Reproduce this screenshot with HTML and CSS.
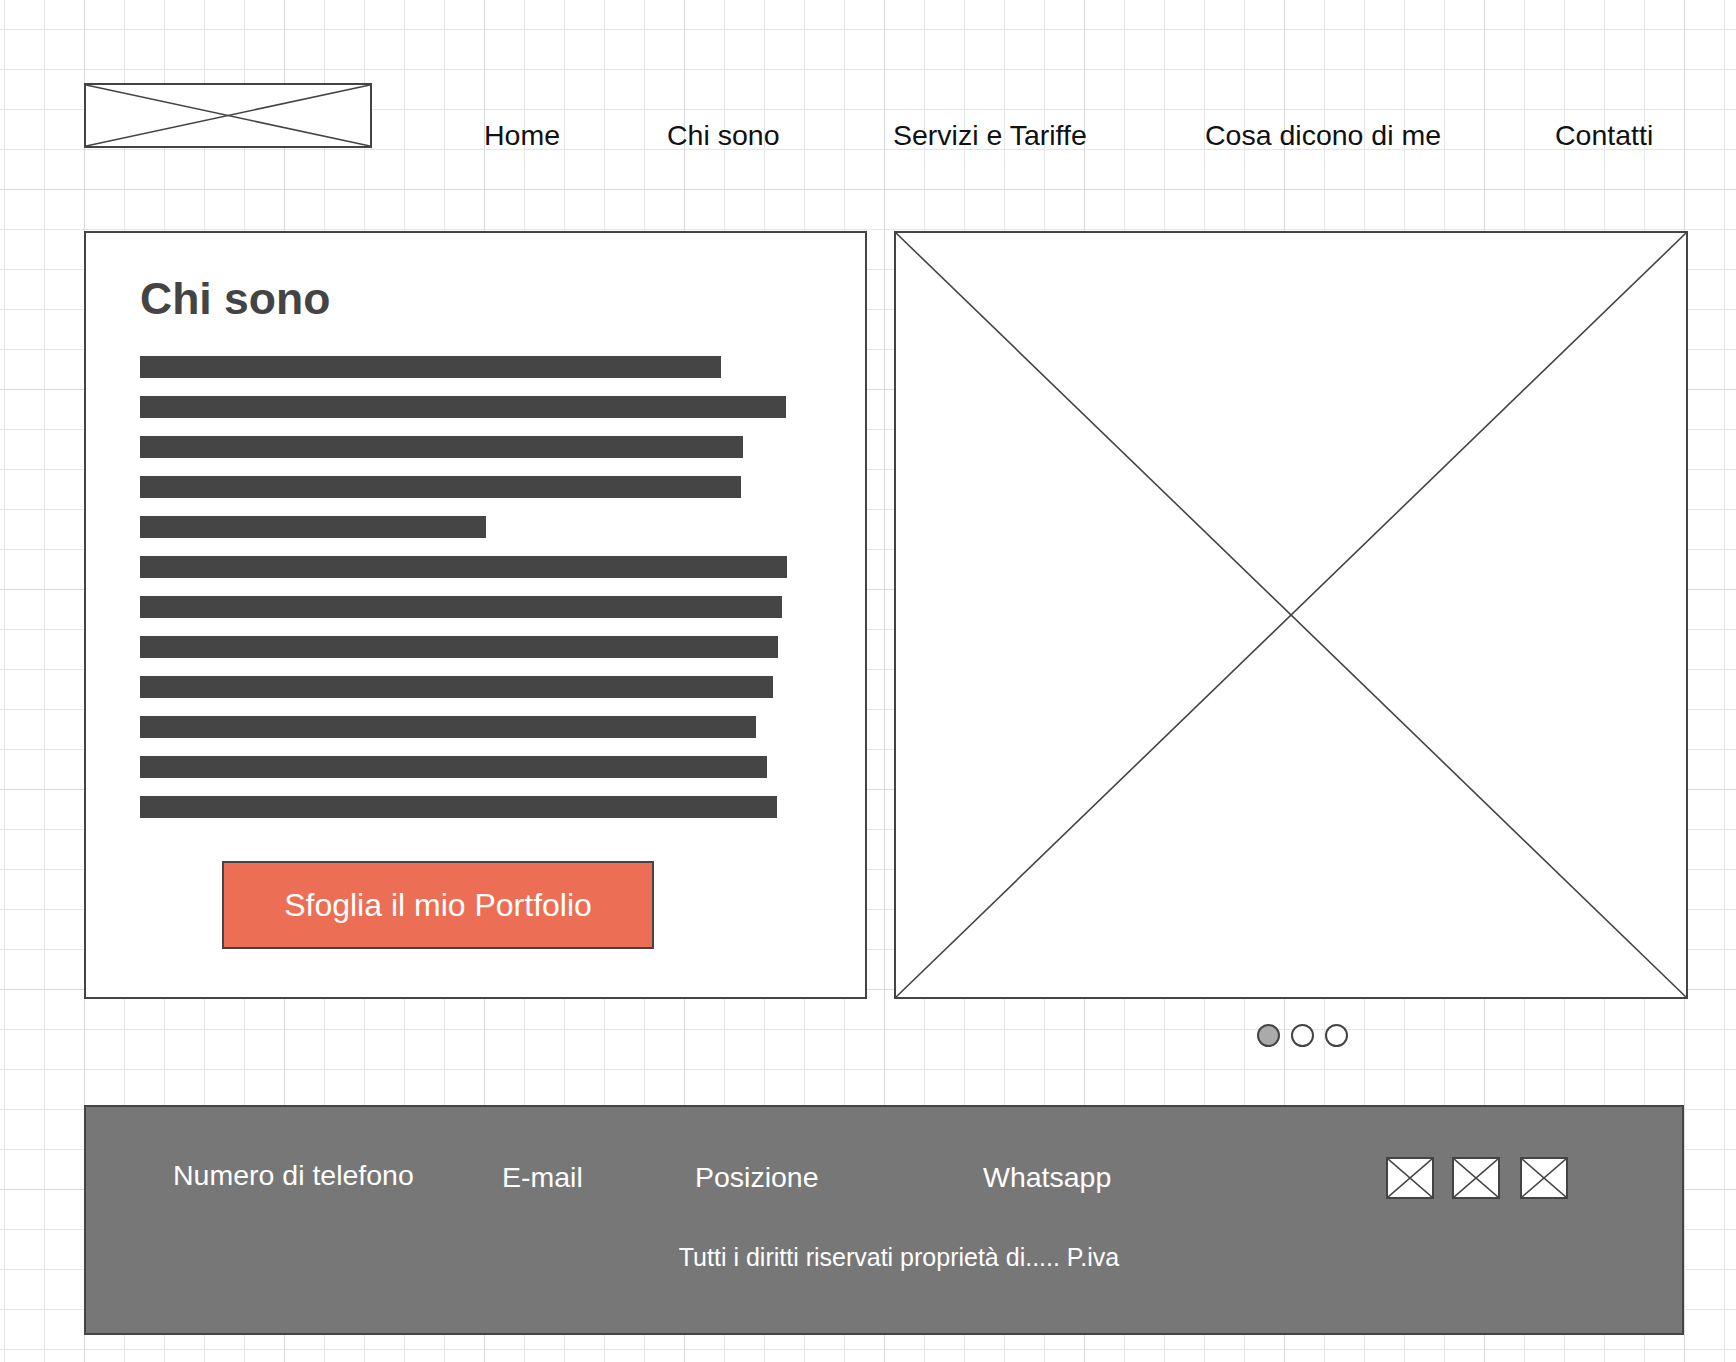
FILE: index.html
```html
<!DOCTYPE html>
<html lang="it">
<head>
    <meta charset="UTF-8">
    <meta name="viewport" content="width=device-width, initial-scale=1.0">
    <title>Chi sono</title>
    <link rel="stylesheet" href="styles.css">
</head>
<body>
    <div class="page">
        <header class="site-header">
            <a href="#" class="logo">
                <svg viewBox="0 0 284 61" preserveAspectRatio="none">
                    <line x1="0" y1="0" x2="284" y2="61"/>
                    <line x1="0" y1="61" x2="284" y2="0"/>
                </svg>
            </a>
            <nav class="navbar">
                <a href="#">Home</a>
                <a href="#">Chi sono</a>
                <a href="#">Servizi e Tariffe</a>
                <a href="#">Cosa dicono di me</a>
                <a href="#">Contatti</a>
            </nav>
        </header>

        <main class="hero">
            <section class="about-card">
                <h1>Chi sono</h1>
                <div class="text-lines">
                    <span class="line" style="width: 581px"></span>
                    <span class="line" style="width: 646px"></span>
                    <span class="line" style="width: 603px"></span>
                    <span class="line" style="width: 601px"></span>
                    <span class="line" style="width: 346px"></span>
                    <span class="line" style="width: 647px"></span>
                    <span class="line" style="width: 642px"></span>
                    <span class="line" style="width: 638px"></span>
                    <span class="line" style="width: 633px"></span>
                    <span class="line" style="width: 616px"></span>
                    <span class="line" style="width: 627px"></span>
                    <span class="line" style="width: 637px"></span>
                </div>
                <a href="#" class="portfolio-btn">Sfoglia il mio Portfolio</a>
            </section>

            <section class="slider">
                <div class="slide">
                    <svg viewBox="0 0 790 764" preserveAspectRatio="none">
                        <line x1="0" y1="0" x2="790" y2="764"/>
                        <line x1="0" y1="764" x2="790" y2="0"/>
                    </svg>
                </div>
                <div class="dots">
                    <span class="dot active"></span>
                    <span class="dot"></span>
                    <span class="dot"></span>
                </div>
            </section>
        </main>

        <footer class="site-footer">
            <div class="footer-links">
                <span class="phone">Numero di telefono</span>
                <span>E-mail</span>
                <span>Posizione</span>
                <span>Whatsapp</span>
                <div class="socials">
                    <a href="#" class="social"><svg viewBox="0 0 44 38" preserveAspectRatio="none"><line x1="0" y1="0" x2="44" y2="38"/><line x1="0" y1="38" x2="44" y2="0"/></svg></a>
                    <a href="#" class="social"><svg viewBox="0 0 44 38" preserveAspectRatio="none"><line x1="0" y1="0" x2="44" y2="38"/><line x1="0" y1="38" x2="44" y2="0"/></svg></a>
                    <a href="#" class="social"><svg viewBox="0 0 44 38" preserveAspectRatio="none"><line x1="0" y1="0" x2="44" y2="38"/><line x1="0" y1="38" x2="44" y2="0"/></svg></a>
                </div>
            </div>
            <p class="copyright">Tutti i diritti riservati proprietà di..... P.iva</p>
        </footer>
    </div>
</body>
</html>
```

FILE: styles.css
```css
* {
    box-sizing: border-box;
}

body {
    margin: 0;
    min-height: 100vh;
    font-family: "Liberation Sans", Arial, sans-serif;
    background-color: #ffffff;
    background-image:
        linear-gradient(#dadada 1px, transparent 1px),
        linear-gradient(90deg, #dadada 1px, transparent 1px),
        linear-gradient(#e6e6e6 1px, transparent 1px),
        linear-gradient(90deg, #e6e6e6 1px, transparent 1px);
    background-size: 200px 200px, 200px 200px, 40px 40px, 40px 40px;
    background-position: 0 189px, 84px 0, 0 29px, 4px 0;
}

.page {
    padding: 83px 0 28px 84px;
}

/* header */

.site-header {
    display: flex;
    align-items: flex-start;
    height: 65px;
}

.logo {
    display: block;
    width: 288px;
    height: 65px;
    border: 2px solid #444;
    background: #fff;
}

.logo svg,
.slide svg,
.social svg {
    display: block;
    width: 100%;
    height: 100%;
}

.logo line,
.slide line,
.social line {
    stroke: #444;
    stroke-width: 1.6;
    vector-effect: non-scaling-stroke;
}

.navbar {
    display: grid;
    grid-template-columns: 183px 226px 312px 350px auto;
    margin-left: 112px;
    margin-top: 36px;
}

.navbar a {
    font-size: 28.5px;
    line-height: 32px;
    color: #111;
    text-decoration: none;
}

/* main */

.hero {
    display: grid;
    grid-template-columns: 783px 794px;
    gap: 27px;
    margin-top: 83px;
    align-items: start;
}

.about-card {
    height: 768px;
    border: 2px solid #444;
    background: #fff;
    padding: 41px 0 0 54px;
}

.about-card h1 {
    margin: 0;
    font-size: 44.5px;
    line-height: 50px;
    font-weight: bold;
    color: #444;
}

.text-lines {
    display: flex;
    flex-direction: column;
    gap: 18px;
    margin-top: 32px;
}

.line {
    display: block;
    height: 22px;
    background: #454545;
}

.portfolio-btn {
    display: flex;
    align-items: center;
    justify-content: center;
    width: 432px;
    height: 88px;
    margin: 43px 0 0 82px;
    border: 2px solid #444;
    background: #ec6e54;
    color: #fff;
    font-size: 32px;
    text-decoration: none;
}

.slide {
    height: 768px;
    border: 2px solid #444;
    background: #fff;
}

.dots {
    display: flex;
    justify-content: center;
    gap: 11px;
    margin-top: 25px;
    padding-left: 22px;
}

.dot {
    width: 23px;
    height: 23px;
    border: 2px solid #444;
    border-radius: 50%;
    background: #fff;
}

.dot.active {
    background: #aaaaaa;
}

/* footer */

.site-footer {
    width: 1600px;
    height: 230px;
    margin-top: 58px;
    border: 2px solid #444;
    background: #777777;
    color: #fff;
    padding: 48px 0 0 87px;
}

.footer-links {
    display: grid;
    grid-template-columns: 329px 193px 288px 403px auto;
    align-items: center;
    font-size: 28.5px;
    line-height: 32px;
}

.footer-links .phone {
    margin-top: -4px;
}

.socials {
    display: flex;
    gap: 18px;
    margin-top: 2px;
}

.social {
    display: block;
    width: 48px;
    height: 42px;
    border: 2px solid #444;
    background: #fff;
}

.social + .social + .social {
    margin-left: 2px;
}

.copyright {
    margin: 44px 0 0;
    padding-right: 57px;
    text-align: center;
    font-size: 25px;
    line-height: 28px;
}
```
